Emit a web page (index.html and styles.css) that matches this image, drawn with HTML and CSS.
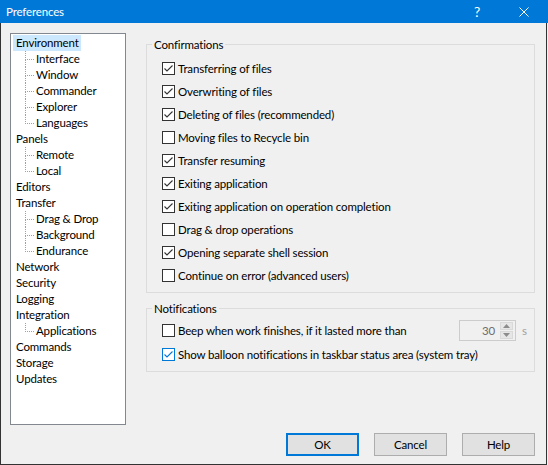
FILE: index.html
```html
<!DOCTYPE html>
<html>
<head>
<meta charset="utf-8">
<title>Preferences</title>
<link rel="stylesheet" href="styles.css">
</head>
<body>
<div class="window">
  <div class="titlebar">
    <span class="title">Preferences</span>
    <span class="tb-help">?</span>
    <span class="tb-close"><svg width="10" height="10" viewBox="0 0 10 10"><path d="M0.5 0.5 L9.5 9.5 M9.5 0.5 L0.5 9.5" stroke="#fff" stroke-width="1" fill="none"/></svg></span>
  </div>
  <div class="body">
    <div class="main">
      <div class="tree">
        <ul class="nodes">
          <li class="node"><span class="lbl sel">Environment</span></li>
          <li class="node child"><span class="lbl">Interface</span></li>
          <li class="node child"><span class="lbl">Window</span></li>
          <li class="node child"><span class="lbl">Commander</span></li>
          <li class="node child"><span class="lbl">Explorer</span></li>
          <li class="node child last"><span class="lbl">Languages</span></li>
          <li class="node"><span class="lbl">Panels</span></li>
          <li class="node child"><span class="lbl">Remote</span></li>
          <li class="node child last"><span class="lbl">Local</span></li>
          <li class="node"><span class="lbl">Editors</span></li>
          <li class="node"><span class="lbl">Transfer</span></li>
          <li class="node child"><span class="lbl">Drag &amp; Drop</span></li>
          <li class="node child"><span class="lbl">Background</span></li>
          <li class="node child last"><span class="lbl">Endurance</span></li>
          <li class="node"><span class="lbl">Network</span></li>
          <li class="node"><span class="lbl">Security</span></li>
          <li class="node"><span class="lbl">Logging</span></li>
          <li class="node"><span class="lbl">Integration</span></li>
          <li class="node child last"><span class="lbl">Applications</span></li>
          <li class="node"><span class="lbl">Commands</span></li>
          <li class="node"><span class="lbl">Storage</span></li>
          <li class="node"><span class="lbl">Updates</span></li>
        </ul>
      </div>
      <div class="pane">
        <fieldset class="group confirm">
          <legend>Confirmations</legend>
          <div class="row"><span class="cb on"><svg width="11" height="11" viewBox="0 0 11 11"><path d="M1.5 5.5 L4 8 L9.5 2.5" stroke="#333" stroke-width="1.1" fill="none"/></svg></span><span class="txt">Transferring of files</span></div>
          <div class="row"><span class="cb on"><svg width="11" height="11" viewBox="0 0 11 11"><path d="M1.5 5.5 L4 8 L9.5 2.5" stroke="#333" stroke-width="1.1" fill="none"/></svg></span><span class="txt">Overwriting of files</span></div>
          <div class="row"><span class="cb on"><svg width="11" height="11" viewBox="0 0 11 11"><path d="M1.5 5.5 L4 8 L9.5 2.5" stroke="#333" stroke-width="1.1" fill="none"/></svg></span><span class="txt">Deleting of files (recommended)</span></div>
          <div class="row"><span class="cb"></span><span class="txt">Moving files to Recycle bin</span></div>
          <div class="row"><span class="cb on"><svg width="11" height="11" viewBox="0 0 11 11"><path d="M1.5 5.5 L4 8 L9.5 2.5" stroke="#333" stroke-width="1.1" fill="none"/></svg></span><span class="txt">Transfer resuming</span></div>
          <div class="row"><span class="cb on"><svg width="11" height="11" viewBox="0 0 11 11"><path d="M1.5 5.5 L4 8 L9.5 2.5" stroke="#333" stroke-width="1.1" fill="none"/></svg></span><span class="txt">Exiting application</span></div>
          <div class="row"><span class="cb on"><svg width="11" height="11" viewBox="0 0 11 11"><path d="M1.5 5.5 L4 8 L9.5 2.5" stroke="#333" stroke-width="1.1" fill="none"/></svg></span><span class="txt">Exiting application on operation completion</span></div>
          <div class="row"><span class="cb"></span><span class="txt">Drag &amp; drop operations</span></div>
          <div class="row"><span class="cb on"><svg width="11" height="11" viewBox="0 0 11 11"><path d="M1.5 5.5 L4 8 L9.5 2.5" stroke="#333" stroke-width="1.1" fill="none"/></svg></span><span class="txt">Opening separate shell session</span></div>
          <div class="row"><span class="cb"></span><span class="txt">Continue on error (advanced users)</span></div>
        </fieldset>
        <fieldset class="group notify">
          <legend>Notifications</legend>
          <div class="row nrow"><span class="cb"></span><span class="txt">Beep when work finishes, if it lasted more than</span>
            <span class="spin"><span class="spin-val">30</span><span class="spin-btns"><span class="sb up"><svg width="7" height="4" viewBox="0 0 7 4"><path d="M0 4 L3.5 0 L7 4 Z" fill="#8c8c8c"/></svg></span><span class="sb down"><svg width="7" height="4" viewBox="0 0 7 4"><path d="M0 0 L3.5 4 L7 0 Z" fill="#8c8c8c"/></svg></span></span></span>
            <span class="unit">s</span>
          </div>
          <div class="row nrow"><span class="cb on hot"><svg width="11" height="11" viewBox="0 0 11 11"><path d="M1.5 5.5 L4 8 L9.5 2.5" stroke="#0078d7" stroke-width="1.1" fill="none"/></svg></span><span class="txt">Show balloon notifications in taskbar status area (system tray)</span></div>
        </fieldset>
      </div>
    </div>
    <div class="buttons">
      <button class="btn default">OK</button>
      <button class="btn">Cancel</button>
      <button class="btn">Help</button>
    </div>
  </div>
</div>
</body>
</html>
```

FILE: styles.css
```css
html, body {
  margin: 0;
  padding: 0;
  background: #f0f0f0;
}
body {
  font-family: Lato, "Noto Sans", sans-serif;
  font-size: 11.5px;
  letter-spacing: -0.15px;
  color: #000;
}
.window {
  width: 548px;
  height: 465px;
  display: flex;
  flex-direction: column;
}
.titlebar {
  height: 23px;
  background: #0078d7;
  color: #fff;
  display: flex;
  align-items: center;
  flex: none;
}
.title {
  margin-left: 6px;
  font-size: 11.5px;
  flex: 1;
}
.tb-help {
  font-size: 14px;
  width: 10px;
  margin-right: 35px;
  line-height: 14px;
}
.tb-close {
  display: flex;
  width: 10px;
  height: 10px;
  margin-right: 19px;
}
.body {
  width: 547px;
  height: 442px;
  box-sizing: border-box;
  border-left: 1px solid #333;
  border-right: 1px solid #333;
  border-bottom: 1px solid #333;
  padding: 10px 11px 0 9px;
  display: flex;
  flex-direction: column;
}
.main {
  display: flex;
  gap: 20px;
}
.tree {
  width: 116px;
  height: 392px;
  box-sizing: border-box;
  border: 1px solid #828790;
  background: #fff;
  flex: none;
}
.nodes {
  list-style: none;
  margin: 0;
  padding: 1px 0 0 2px;
}
.node {
  position: relative;
  height: 16px;
  line-height: 16px;
}
.lbl {
  display: inline-block;
  padding: 0 2px 0 3px;
  height: 16px;
  white-space: nowrap;
}
.lbl.sel {
  background: #cce8ff;
}
.child .lbl {
  margin-left: 20px;
}
.child::before {
  content: "";
  position: absolute;
  left: 12px;
  top: 0;
  width: 8px;
  height: 8px;
  border-left: 1px dotted #a0a0a0;
  border-bottom: 1px dotted #a0a0a0;
}
.child:not(.last)::after {
  content: "";
  position: absolute;
  left: 12px;
  top: 9px;
  bottom: 0;
  border-left: 1px dotted #a0a0a0;
}
.pane {
  flex: 1;
  display: flex;
  flex-direction: column;
  padding-top: 4px;
}
.group {
  margin: 0;
  border: 1px solid #dcdcdc;
  padding: 0 7px 0 15px;
  min-width: 0;
}
.group legend {
  padding: 0 2px;
  margin-left: -10px;
  line-height: 15px;
  height: 15px;
}
.confirm {
  padding-top: 5px;
  padding-bottom: 5px;
}
.notify {
  margin-top: 8px;
  padding-top: 2px;
  padding-bottom: 5px;
}
.row {
  display: flex;
  align-items: center;
  height: 23px;
}
.nrow {
  height: 24px;
}
.cb {
  width: 13px;
  height: 13px;
  box-sizing: border-box;
  border: 1px solid #333;
  background: #fff;
  display: flex;
  align-items: center;
  justify-content: center;
  flex: none;
}
.cb.hot {
  border-color: #0078d7;
}
.txt {
  margin-left: 3px;
  white-space: nowrap;
}
.spin {
  margin-left: auto;
  width: 57px;
  height: 21px;
  box-sizing: border-box;
  border: 1px solid #cccccc;
  display: flex;
  align-items: center;
}
.spin-val {
  flex: 1;
  text-align: right;
  color: #6d6d6d;
  padding-right: 5px;
}
.spin-btns {
  display: flex;
  flex-direction: column;
  gap: 1px;
  margin-right: 2px;
}
.sb {
  width: 13px;
  height: 8px;
  box-sizing: border-box;
  border: 1px solid #d9d9d9;
  background: #e6e6e6;
  display: flex;
  align-items: center;
  justify-content: center;
}
.unit {
  margin-left: 6px;
  color: #a0a0a0;
  width: 5px;
}
.buttons {
  display: flex;
  justify-content: flex-end;
  gap: 15px;
  margin-top: 8px;
}
.btn {
  width: 73px;
  height: 23px;
  box-sizing: border-box;
  border: 1px solid #adadad;
  background: #e1e1e1;
  font-family: Lato, "Noto Sans", sans-serif;
  font-size: 11.5px;
  letter-spacing: -0.15px;
  color: #000;
  padding: 0;
}
.btn.default {
  border: 2px solid #0078d7;
}
```
